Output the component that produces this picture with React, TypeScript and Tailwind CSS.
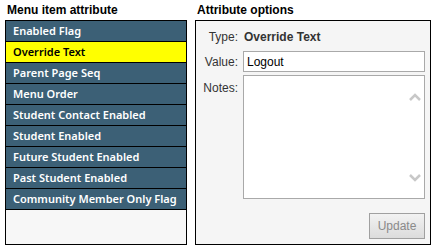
const items = [
  "Enabled Flag",
  "Override Text",
  "Parent Page Seq",
  "Menu Order",
  "Student Contact Enabled",
  "Student Enabled",
  "Future Student Enabled",
  "Past Student Enabled",
  "Community Member Only Flag",
];

const selected = "Override Text";

export default function App() {
  return (
    <div className="flex h-[252px] w-[438px] gap-[8px] bg-white pl-[5px] pt-[3px] font-['Liberation_Sans',Arial,sans-serif] text-[12px] text-black">
      {/* left list */}
      <div className="flex w-[182px] flex-col">
        <div className="h-[17px] pl-[2px] text-[12px] font-bold leading-[14px]">Menu item attribute</div>
        <div className="flex h-[225px] flex-col border border-black bg-[#f7f7f7]">
          {items.map((item) => (
            <div
              key={item}
              className={`h-[21px] shrink-0 whitespace-nowrap border-b border-black pl-[7px] font-['Noto_Sans',Tahoma,sans-serif] text-[11px] font-semibold leading-[20px] ${
                item === selected ? "bg-[#ffff00] text-black" : "bg-[#3c6076] text-white"
              }`}
            >
              {item}
            </div>
          ))}
        </div>
      </div>

      {/* right options */}
      <div className="flex w-[236px] flex-col">
        <div className="h-[17px] pl-[2px] text-[12px] font-bold leading-[14px]">Attribute options</div>
        <div className="flex h-[225px] flex-col border border-black bg-[#f5f5f5] pr-[5px] pt-[6px]">
          <div className="flex h-[20px] items-center">
            <span className="w-[48px] pr-[6px] text-right text-[#333]">Type:</span>
            <span className="font-bold text-[#333]">Override Text</span>
          </div>
          <div className="mt-[4px] flex items-center">
            <span className="w-[47px] pr-[5px] text-right text-[#333]">Value:</span>
            <div className="flex h-[21px] flex-1 items-center border border-[#a9a9a9] bg-white px-[3px]">Logout</div>
          </div>
          <div className="mt-[3px] flex items-start">
            <span className="w-[47px] pr-[5px] pt-[4px] text-right text-[#333]">Notes:</span>
            <div className="relative h-[124px] flex-1 border border-[#a9a9a9] bg-white">
              <svg className="absolute right-[3px] top-[17px]" width="12" height="8" viewBox="0 0 12 8">
                <path d="M1 7 L6 2 L11 7" fill="none" stroke="#c8c8c8" strokeWidth="2.5" />
              </svg>
              <svg className="absolute bottom-[16px] right-[3px]" width="12" height="8" viewBox="0 0 12 8">
                <path d="M1 1 L6 6 L11 1" fill="none" stroke="#c8c8c8" strokeWidth="2.5" />
              </svg>
            </div>
          </div>
          <div className="mt-[14px] flex justify-end">
            <button className="h-[26px] w-[56px] border border-[#a0a0a0] bg-gradient-to-b from-[#f2f2f2] to-[#dcdcdc] text-[12px] text-[#8a8a8a]">
              Update
            </button>
          </div>
        </div>
      </div>
    </div>
  );
}
